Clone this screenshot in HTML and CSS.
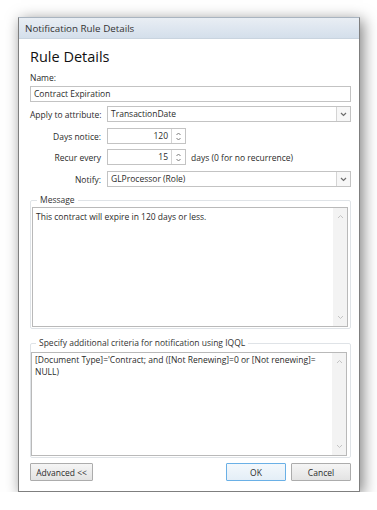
FILE: index.html
```html
<!DOCTYPE html>
<html lang="en">
<head>
    <meta charset="UTF-8">
    <title>Notification Rule Details</title>
    <link rel="stylesheet" href="styles.css">
</head>
<body>
    <div class="window">
        <div class="titlebar">Notification Rule Details</div>

        <div class="content">
            <h1>Rule Details</h1>
            <div class="label">Name:</div>
            <div class="field">Contract Expiration</div>

            <div class="row first">
                <span class="row-label left">Apply to attribute:</span>
                <div class="field select">
                    <span class="value">TransactionDate</span>
                    <span class="drop"><svg width="7" height="5" viewBox="0 0 7 5"><path d="M1 1 L3.5 3.5 L6 1" fill="none" stroke="#6d6d6d" stroke-width="1.2"/></svg></span>
                </div>
            </div>

            <div class="row wide">
                <span class="row-label">Days notice:</span>
                <div class="field spin">
                    <span class="value">120</span>
                    <span class="arrows">
                        <svg width="5" height="4" viewBox="0 0 5 4"><path d="M0.5 3 L2.5 1 L4.5 3" fill="none" stroke="#7a7a7a"/></svg>
                        <svg width="5" height="4" viewBox="0 0 5 4"><path d="M0.5 1 L2.5 3 L4.5 1" fill="none" stroke="#7a7a7a"/></svg>
                    </span>
                </div>
            </div>

            <div class="row">
                <span class="row-label">Recur every</span>
                <div class="field spin">
                    <span class="value">15</span>
                    <span class="arrows">
                        <svg width="5" height="4" viewBox="0 0 5 4"><path d="M0.5 3 L2.5 1 L4.5 3" fill="none" stroke="#7a7a7a"/></svg>
                        <svg width="5" height="4" viewBox="0 0 5 4"><path d="M0.5 1 L2.5 3 L4.5 1" fill="none" stroke="#7a7a7a"/></svg>
                    </span>
                </div>
                <span class="hint">days (0 for no recurrence)</span>
            </div>

            <div class="row wide">
                <span class="row-label">Notify:</span>
                <div class="field select">
                    <span class="value">GLProcessor (Role)</span>
                    <span class="drop"><svg width="7" height="5" viewBox="0 0 7 5"><path d="M1 1 L3.5 3.5 L6 1" fill="none" stroke="#6d6d6d" stroke-width="1.2"/></svg></span>
                </div>
            </div>

            <fieldset class="group message">
                <legend>Message</legend>
                <div class="textbox">
                    <div class="text">This contract will expire in 120 days or less.</div>
                    <div class="scrollbar">
                        <svg width="7" height="5" viewBox="0 0 7 5"><path d="M1 4 L3.5 1.5 L6 4" fill="none" stroke="#c4c4c4"/></svg>
                        <svg width="7" height="5" viewBox="0 0 7 5"><path d="M1 1 L3.5 3.5 L6 1" fill="none" stroke="#c4c4c4"/></svg>
                    </div>
                </div>
            </fieldset>

            <fieldset class="group criteria">
                <legend>Specify additional criteria for notification using IQQL</legend>
                <div class="textbox">
                    <div class="text">[Document Type]='Contract; and ([Not Renewing]=0 or [Not renewing]= NULL)</div>
                    <div class="scrollbar">
                        <svg width="7" height="5" viewBox="0 0 7 5"><path d="M1 4 L3.5 1.5 L6 4" fill="none" stroke="#c4c4c4"/></svg>
                        <svg width="7" height="5" viewBox="0 0 7 5"><path d="M1 1 L3.5 3.5 L6 1" fill="none" stroke="#c4c4c4"/></svg>
                    </div>
                </div>
            </fieldset>

            <div class="buttons">
                <button class="btn advanced">Advanced &lt;&lt;</button>
                <span class="spacer"></span>
                <button class="btn default">OK</button>
                <button class="btn">Cancel</button>
            </div>
        </div>
    </div>
</body>
</html>
```

FILE: styles.css
```css
body {
    margin: 0;
    background-color: #fff;
    font-family: 'Open Sans', sans-serif;
    font-size: 8.5px;
    color: #2b2b2b;
}

.window {
    margin: 17px 0 0 18px;
    width: 342px;
    height: 475px;
    box-sizing: border-box;
    border: 1px solid #7f7f7f;
    border-top-color: #a9b4c0;
    background-color: #fff;
    box-shadow: 3px 3px 14px rgba(0, 0, 0, 0.5);
    display: flex;
    flex-direction: column;
}

.titlebar {
    height: 20px;
    line-height: 22px;
    padding-left: 6px;
    font-size: 9.8px;
    color: #333;
    background: linear-gradient(#e9eef4, #d4dfeb);
    border-bottom: 1px solid #c9d4df;
}

.content {
    padding: 8px 8px 0 11px;
    display: flex;
    flex-direction: column;
}

h1 {
    margin: 0;
    font-size: 14.5px;
    font-weight: normal;
    line-height: 20px;
    color: #111;
}

.label {
    margin-top: 4px;
    line-height: 13px;
}

.field {
    height: 16px;
    box-sizing: border-box;
    border: 1px solid #c3c3c3;
    line-height: 14px;
    padding-left: 3px;
    margin-top: 2px;
    background-color: #fff;
    white-space: nowrap;
}

.row {
    display: flex;
    align-items: center;
    margin-top: 5px;
}

.row.first {
    margin-top: 4px;
}

.row.wide {
    margin-top: 6px;
}

.row .field {
    margin-top: 0;
}

.row-label {
    width: 71px;
    text-align: right;
    margin-right: 6px;
    white-space: nowrap;
}

.row-label.left {
    text-align: left;
}

.select {
    flex: 1;
    display: flex;
    padding-right: 0;
}

.select .value,
.spin .value {
    flex: 1;
}

.drop {
    width: 13px;
    border-left: 1px solid #d4d4d4;
    background-color: #f7f7f7;
    display: flex;
    align-items: center;
    justify-content: center;
}

.spin {
    width: 79px;
    display: flex;
    padding-right: 0;
}

.spin .value {
    text-align: right;
    padding-right: 3px;
}

.arrows {
    width: 13px;
    border-left: 1px solid #d4d4d4;
    display: flex;
    flex-direction: column;
    align-items: center;
    justify-content: center;
    gap: 1px;
}

.arrows svg {
    display: block;
}

.hint {
    margin-left: 5px;
}

.group {
    margin: 7px 0 0 0;
    padding: 0 2px 1px 1px;
    border: 1px solid #dfe3e7;
    border-radius: 2px;
    min-width: 0;
}

.group legend {
    padding: 0 3px;
    margin-left: 5px;
    line-height: 12px;
    color: #333;
}

.textbox {
    display: flex;
    box-sizing: border-box;
    border: 1px solid #b9b9b9;
    background-color: #fff;
    margin-top: 1px;
}

.message .textbox {
    height: 120px;
}

.criteria {
    margin-top: 8px;
    padding-left: 0;
    padding-right: 3px;
}

.criteria .textbox {
    height: 104px;
    margin-top: 3px;
}

.text {
    flex: 1;
    padding: 3px 0 0 3px;
    line-height: 12px;
}

.criteria .text {
    padding-top: 1px;
    padding-right: 6px;
}

.scrollbar {
    width: 14px;
    background-color: #f3f3f3;
    display: flex;
    flex-direction: column;
    justify-content: space-between;
    align-items: center;
    padding: 6px 0 6px 0;
}

.buttons {
    display: flex;
    margin-top: 5px;
    gap: 5px;
}

.spacer {
    flex: 1;
}

.btn {
    height: 18px;
    padding: 0;
    font-family: 'Open Sans', sans-serif;
    font-size: 8.5px;
    color: #2b2b2b;
    border: 1px solid #acacac;
    border-radius: 1px;
    background: linear-gradient(#f5f5f5, #e3e3e3);
}

.advanced {
    width: 63px;
}

.btn.default,
.btn:last-child {
    width: 60px;
}

.btn.default {
    border-color: #6ab0e6;
    background: linear-gradient(#f3f8fc, #e4eef7);
}
```
